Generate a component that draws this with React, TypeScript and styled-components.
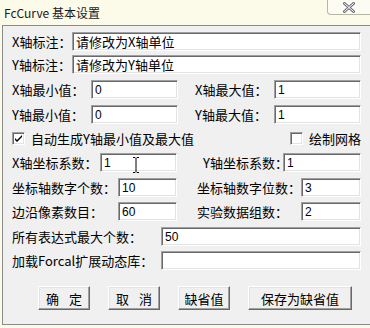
import { createGlobalStyle, styled } from "styled-components";

const GlobalStyle = createGlobalStyle`
  html, body {
    margin: 0;
    padding: 0;
    background: #fcfae9;
    overflow: hidden;
  }
`;

const Window = styled.div`
  width: 370px;
  height: 328px;
  display: flex;
  flex-direction: column;
  background: #fcfae9;
`;

const TitleBar = styled.div`
  height: 25px;
  display: flex;
  justify-content: space-between;
  align-items: flex-start;
`;

const Title = styled.div`
  padding: 5px 0 0 4px;
  font: 12px "Noto Sans CJK SC", sans-serif;
  color: #1a1a1a;
  line-height: 16px;
`;

const CloseButton = styled.div`
  width: 44px;
  height: 15px;
  margin-right: -1px;
  box-sizing: border-box;
  border: 1px solid #b8b5a4;
  border-top: none;
  border-radius: 0 0 0 4px;
  display: flex;
  align-items: center;
  justify-content: center;
  background: #fdfcf2;
`;

const Client = styled.div`
  position: relative;
  margin-left: 2px;
  height: 300px;
  box-sizing: border-box;
  border-left: 1px solid #8a8a8a;
  border-top: 1px solid #8a8a8a;
  border-bottom: 1px solid #8a8a8a;
  background: #f0f0f0;
  padding: 6px 9px 0 9px;
  display: flex;
  flex-direction: column;
`;

const Row = styled.div<{ $mt?: number; $h?: number }>`
  display: flex;
  align-items: center;
  height: ${(p) => p.$h ?? 19}px;
  margin-top: ${(p) => p.$mt ?? 0}px;
`;

const Field = styled.div<{ $ml?: number }>`
  display: flex;
  align-items: center;
  margin-left: ${(p) => p.$ml ?? 0}px;
`;

const Label = styled.span<{ $w: number }>`
  width: ${(p) => p.$w}px;
  font: 13px "Noto Sans CJK SC", sans-serif;
  color: #000;
  white-space: nowrap;
  line-height: 19px;
`;

const TextBox = styled.input<{ $w: number; $cjk?: boolean }>`
  width: ${(p) => p.$w}px;
  height: 19px;
  box-sizing: border-box;
  margin: 0;
  padding: 0 0 0 3px;
  border-top: 1px solid #a0a0a0;
  border-left: 1px solid #a0a0a0;
  border-right: 1px solid #ffffff;
  border-bottom: 1px solid #ffffff;
  box-shadow: inset 1px 1px #696969, inset -1px -1px #e3e3e3;
  background: #fff;
  color: #000;
  font: ${(p) => (p.$cjk ? `13px "Noto Sans CJK SC"` : `12px "Liberation Sans"`)}, sans-serif;
  outline: none;
`;

const CheckItem = styled.label<{ $w?: number }>`
  display: flex;
  align-items: center;
  gap: 6px;
  width: ${(p) => (p.$w ? `${p.$w}px` : "auto")};
  font: 13px "Noto Sans CJK SC", sans-serif;
  color: #000;
  white-space: nowrap;
`;

const CheckBox = styled.span`
  width: 13px;
  height: 13px;
  box-sizing: border-box;
  border-top: 1px solid #a0a0a0;
  border-left: 1px solid #a0a0a0;
  border-right: 1px solid #fff;
  border-bottom: 1px solid #fff;
  box-shadow: inset 1px 1px #696969, inset -1px -1px #e3e3e3;
  background: #fff;
  display: flex;
  align-items: center;
  justify-content: center;
`;

const ButtonBar = styled.div`
  display: flex;
  gap: 18px;
  margin-top: 16px;
  padding-left: 26px;
`;

const Button = styled.button<{ $w: number }>`
  width: ${(p) => p.$w}px;
  height: 24px;
  box-sizing: border-box;
  margin: 0;
  padding: 0;
  background: #f0f0f0;
  border-top: 1px solid #ffffff;
  border-left: 1px solid #ffffff;
  border-right: 1px solid #696969;
  border-bottom: 1px solid #696969;
  box-shadow: inset -1px -1px #a0a0a0, inset 1px 1px #e3e3e3;
  font: 13px "Noto Sans CJK SC", sans-serif;
  word-spacing: 7px;
  color: #000;
`;

const Cursor = styled.svg`
  position: absolute;
  left: 129px;
  top: 131px;
`;

function Check({ on }: { on: boolean }) {
  return (
    <CheckBox>
      {on && (
        <svg width="7" height="7" viewBox="0 0 7 7">
          <path d="M0 3 L2 5 L7 0 L7 2 L2 7 L0 5 Z" fill="#000" />
        </svg>
      )}
    </CheckBox>
  );
}

export default function App() {
  return (
    <>
      <GlobalStyle />
      <Window>
        <TitleBar>
          <Title>FcCurve 基本设置</Title>
          <CloseButton>
            <svg width="12" height="11" viewBox="0 0 12 11">
              <path
                d="M1.5 1.5 L10.5 9.5 M10.5 1.5 L1.5 9.5"
                stroke="#6e6e7a"
                strokeWidth="3"
                strokeLinecap="round"
              />
              <path
                d="M1.5 1.5 L10.5 9.5 M10.5 1.5 L1.5 9.5"
                stroke="#ffffff"
                strokeWidth="1"
                strokeLinecap="round"
              />
            </svg>
          </CloseButton>
        </TitleBar>
        <Client>
          <Row>
            <Label $w={60}>X轴标注：</Label>
            <TextBox $w={289} $cjk readOnly value="请修改为X轴单位" />
          </Row>
          <Row $mt={4}>
            <Label $w={60}>Y轴标注：</Label>
            <TextBox $w={289} $cjk readOnly value="请修改为Y轴单位" />
          </Row>
          <Row $mt={6}>
            <Field>
              <Label $w={79}>X轴最小值：</Label>
              <TextBox $w={87} readOnly value="0" />
            </Field>
            <Field $ml={17}>
              <Label $w={79}>X轴最大值：</Label>
              <TextBox $w={87} readOnly value="1" />
            </Field>
          </Row>
          <Row $mt={6}>
            <Field>
              <Label $w={79}>Y轴最小值：</Label>
              <TextBox $w={87} readOnly value="0" />
            </Field>
            <Field $ml={17}>
              <Label $w={79}>Y轴最大值：</Label>
              <TextBox $w={87} readOnly value="1" />
            </Field>
          </Row>
          <Row $mt={4} $h={20}>
            <CheckItem $w={280}>
              <Check on />
              自动生成Y轴最小值及最大值
            </CheckItem>
            <CheckItem>
              <Check on={false} />
              绘制网格
            </CheckItem>
          </Row>
          <Row $mt={5}>
            <Field>
              <Label $w={88}>X轴坐标系数：</Label>
              <TextBox $w={77} readOnly value="1" />
            </Field>
            <Field $ml={26}>
              <Label $w={80}>Y轴坐标系数：</Label>
              <TextBox $w={78} readOnly value="1" />
            </Field>
          </Row>
          <Row $mt={6}>
            <Field>
              <Label $w={106}>坐标轴数字个数：</Label>
              <TextBox $w={59} readOnly value="10" />
            </Field>
            <Field $ml={20}>
              <Label $w={104}>坐标轴数字位数：</Label>
              <TextBox $w={60} readOnly value="3" />
            </Field>
          </Row>
          <Row $mt={5}>
            <Field>
              <Label $w={106}>边沿像素数目：</Label>
              <TextBox $w={59} readOnly value="60" />
            </Field>
            <Field $ml={20}>
              <Label $w={104}>实验数据组数：</Label>
              <TextBox $w={60} readOnly value="2" />
            </Field>
          </Row>
          <Row $mt={6}>
            <Label $w={149}>所有表达式最大个数：</Label>
            <TextBox $w={200} readOnly value="50" />
          </Row>
          <Row $mt={5}>
            <Label $w={149}>加载Forcal扩展动态库：</Label>
            <TextBox $w={200} readOnly value="" />
          </Row>
          <ButtonBar>
            <Button $w={52}>确 定</Button>
            <Button $w={52}>取 消</Button>
            <Button $w={52}>缺省值</Button>
            <Button $w={104}>保存为缺省值</Button>
          </ButtonBar>
          <Cursor width="8" height="16" viewBox="0 0 8 16">
            <path
              d="M1 0.5 H3 L4 1.5 L5 0.5 H7 M4 1.5 V14.5 M1 15.5 H3 L4 14.5 L5 15.5 H7"
              stroke="#000"
              strokeWidth="1"
              fill="none"
            />
          </Cursor>
        </Client>
      </Window>
    </>
  );
}
